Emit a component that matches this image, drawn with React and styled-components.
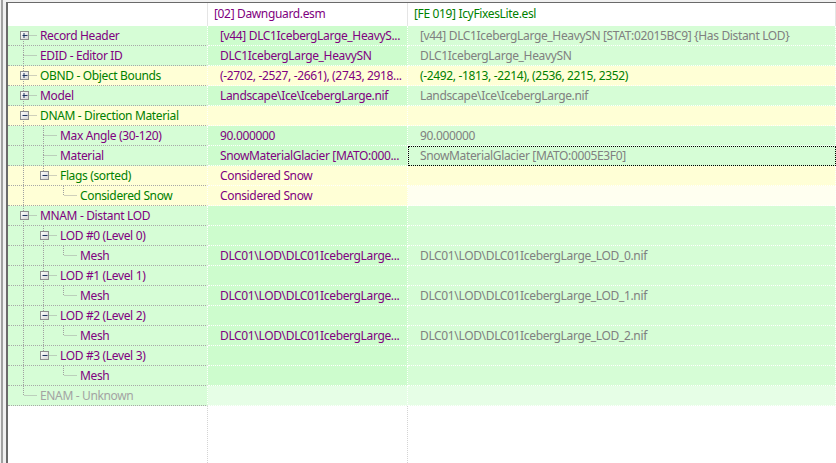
import React from "react";
import styled, { createGlobalStyle } from "styled-components";

const Global = createGlobalStyle`
  html, body { margin: 0; padding: 0; height: 100%; overflow: hidden; background: #f0f0f0; }
  #root { height: 100%; }
  * { box-sizing: border-box; }
`;

const C = {
  purple: "#800080",
  green: "#008000",
  gray: "#808080",
  faint: "#a3a3a3",
};

const BG = {
  g1: "#d6fdd6",
  g2: "#cdfccd",
  g3: "#d6fdd6",
  y1: "#ffffd6",
  y2: "#ffffd6",
  y3: "#ffffd6",
  e1: "#d8fdd8",
  e2: "#e6fee6",
  e3: "#e6fee6",
};

const Frame = styled.div`
  display: flex;
  height: 100%;
  padding-left: 1px;
  font-family: "Noto Sans", "Open Sans", sans-serif;
  font-size: 12px;
  letter-spacing: -0.35px;
`;

const Splitter = styled.div`
  width: 2px;
  background: #a0a0a0;
  margin-right: 3px;
`;

const Panel = styled.div`
  flex: 1;
  margin-top: 2px;
  border-top: 1px solid #6a6a6a;
  border-left: 2px solid #6a6a6a;
  background: #fff;
  display: flex;
  flex-direction: column;
  min-width: 0;
`;

const Header = styled.div`
  display: grid;
  grid-template-columns: 200px 200px 1fr;
  height: 23px;
  flex: none;
`;

const HeadCell = styled.div`
  padding-left: 6px;
  line-height: 22px;
  color: ${(p) => p.$color || "#000"};
  border-right: 1px solid #e5e5e5;
  white-space: nowrap;
  overflow: hidden;
`;

const Row = styled.div`
  display: grid;
  grid-template-columns: 200px 200px 1fr;
  height: 20px;
  flex: none;
`;

const Cell = styled.div`
  height: 20px;
  background: ${(p) => p.$bg};
  border-bottom: 1px dotted ${(p) => p.$line || "#ffffff"};
  border-right: 1px dotted #ffffff;
  color: ${(p) => p.$color};
  line-height: 19px;
  white-space: nowrap;
  overflow: hidden;
  padding-left: ${(p) => (p.$tree ? 0 : 12)}px;
  display: flex;
  align-items: center;
  ${(p) => p.$focus && `outline: 1px dotted #000; outline-offset: -1px;`}
`;

const Label = styled.span`
  line-height: 19px;
`;

const Filler = styled.div`
  flex: 1;
  display: grid;
  grid-template-columns: 200px 200px 1fr;
`;

const FillCol = styled.div`
  border-right: 1px dotted #d4d4d4;
`;

const rows = [
  { l: 0, t: "Record Header", box: "+", c: "purple", bg: "g", v2: "[v44] DLC1IcebergLarge_HeavyS...", v3: "[v44] DLC1IcebergLarge_HeavySN [STAT:02015BC9] {Has Distant LOD}" },
  { l: 0, t: "EDID - Editor ID", c: "purple", bg: "g", v2: "DLC1IcebergLarge_HeavySN", v3: "DLC1IcebergLarge_HeavySN" },
  { l: 0, t: "OBND - Object Bounds", box: "+", c: "green", bg: "y", v2: "(-2702, -2527, -2661), (2743, 2918...", v3: "(-2492, -1813, -2214), (2536, 2215, 2352)", c3: "green" },
  { l: 0, t: "Model", box: "+", c: "purple", bg: "g", v2: "Landscape\\Ice\\IcebergLarge.nif", v3: "Landscape\\Ice\\IcebergLarge.nif" },
  { l: 0, t: "DNAM - Direction Material", box: "-", c: "green", bg: "y" },
  { l: 1, t: "Max Angle (30-120)", c: "purple", bg: "g", v2: "90.000000", v3: "90.000000" },
  { l: 1, t: "Material", c: "purple", bg: "g", v2: "SnowMaterialGlacier [MATO:000...", v3: "SnowMaterialGlacier [MATO:0005E3F0]", focus: true },
  { l: 1, t: "Flags (sorted)", box: "-", c: "green", bg: "y", v2: "Considered Snow" },
  { l: 2, t: "Considered Snow", c: "green", bg: "y", v2: "Considered Snow", bg3: "#fffff0" },
  { l: 0, t: "MNAM - Distant LOD", box: "-", c: "purple", bg: "g" },
  { l: 1, t: "LOD #0 (Level 0)", box: "-", c: "purple", bg: "g" },
  { l: 2, t: "Mesh", c: "purple", bg: "g", v2: "DLC01\\LOD\\DLC01IcebergLarge...", v3: "DLC01\\LOD\\DLC01IcebergLarge_LOD_0.nif" },
  { l: 1, t: "LOD #1 (Level 1)", box: "-", c: "purple", bg: "g" },
  { l: 2, t: "Mesh", c: "purple", bg: "g", v2: "DLC01\\LOD\\DLC01IcebergLarge...", v3: "DLC01\\LOD\\DLC01IcebergLarge_LOD_1.nif" },
  { l: 1, t: "LOD #2 (Level 2)", box: "-", c: "purple", bg: "g" },
  { l: 2, t: "Mesh", c: "purple", bg: "g", v2: "DLC01\\LOD\\DLC01IcebergLarge...", v3: "DLC01\\LOD\\DLC01IcebergLarge_LOD_2.nif" },
  { l: 1, t: "LOD #3 (Level 3)", box: "-", c: "purple", bg: "g" },
  { l: 2, t: "Mesh", c: "purple", bg: "g" },
  { l: 0, t: "ENAM - Unknown", c: "faint", bg: "e" },
];

function hasNextSibling(i) {
  const L = rows[i].l;
  for (let j = i + 1; j < rows.length; j++) {
    if (rows[j].l < L) return false;
    if (rows[j].l === L) return true;
  }
  return false;
}

function ancestorContinues(i, k) {
  for (let j = i - 1; j >= 0; j--) {
    if (rows[j].l === k) return hasNextSibling(j);
  }
  return false;
}

const LINE = "#a0a0a0";

function Guides({ i }) {
  const r = rows[i];
  const L = r.l;
  const w = 32 + 20 * L;
  const x = 15.5 + 20 * L;
  const next = hasNextSibling(i);
  const first = i === 0;
  const parts = [];
  for (let k = 0; k < L; k++) {
    if (ancestorContinues(i, k)) {
      const ax = 15.5 + 20 * k;
      parts.push(<line key={"a" + k} x1={ax} y1={0} x2={ax} y2={20} stroke={LINE} strokeDasharray="1 1" />);
    }
  }
  if (!first) parts.push(<line key="top" x1={x} y1={0} x2={x} y2={9} stroke={LINE} strokeDasharray="1 1" />);
  if (next) parts.push(<line key="bot" x1={x} y1={9} x2={x} y2={20} stroke={LINE} strokeDasharray="1 1" />);
  parts.push(<line key="h" x1={x + 1} y1={9.5} x2={w - 3} y2={9.5} stroke={LINE} strokeDasharray="1 1" />);
  if (r.box) {
    const bx = 12.5 + 20 * L;
    const cx = bx + 3.5;
    parts.push(
      <g key="box">
        <rect x={bx} y={5.5} width={8} height={8} fill="url(#boxfill)" stroke="#8e8f8f" />
        <line x1={bx + 2} y1={9.5} x2={bx + 7} y2={9.5} stroke="#1f3560" />
        {r.box === "+" && <line x1={cx} y1={7} x2={cx} y2={12} stroke="#1f3560" />}
      </g>
    );
  }
  return (
    <svg width={w} height={19} style={{ flex: "none", overflow: "visible" }}>
      <defs>
        <linearGradient id="boxfill" x1="0" y1="0" x2="1" y2="1">
          <stop offset="0" stopColor="#ffffff" />
          <stop offset="1" stopColor="#d4d4d4" />
        </linearGradient>
      </defs>
      {parts}
    </svg>
  );
}

export default function App() {
  return (
    <>
      <Global />
      <Frame>
        <Splitter />
        <Panel>
          <Header>
            <HeadCell />
            <HeadCell $color={C.purple}>[02] Dawnguard.esm</HeadCell>
            <HeadCell $color={C.green}>[FE 019] IcyFixesLite.esl</HeadCell>
          </Header>
          {rows.map((r, i) => (
            <Row key={i}>
              <Cell $tree $bg={BG[r.bg + "1"]} $line="#a8a8a8" $color={C[r.c]}>
                <Guides i={i} />
                <Label>{r.t}</Label>
              </Cell>
              <Cell $bg={BG[r.bg + "2"]} $color={C.purple}>
                {r.v2 || ""}
              </Cell>
              <Cell $bg={r.bg3 || BG[r.bg + "3"]} $color={C[r.c3 || "gray"]} $focus={r.focus}>
                {r.v3 || ""}
              </Cell>
            </Row>
          ))}
          <Filler>
            <FillCol />
            <FillCol />
            <div />
          </Filler>
        </Panel>
      </Frame>
    </>
  );
}
